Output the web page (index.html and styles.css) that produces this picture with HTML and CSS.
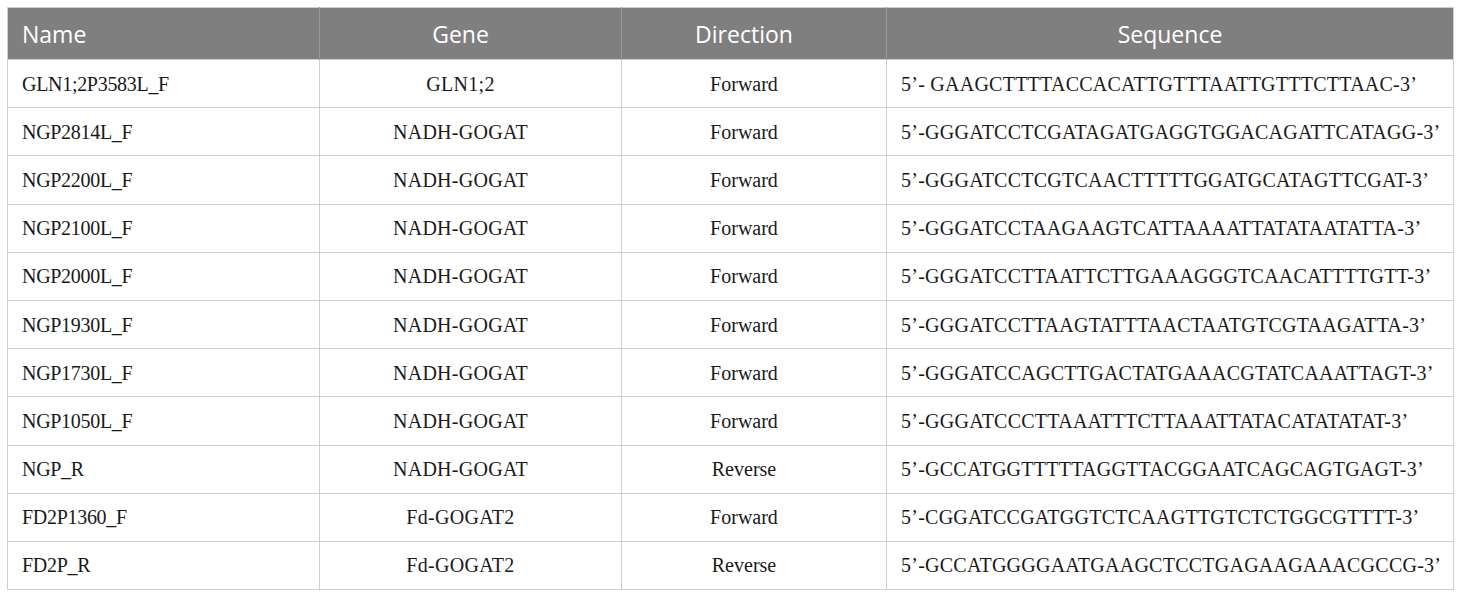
FILE: index.html
```html
<!DOCTYPE html>
<html>
<head>
<meta charset="utf-8">
<link rel="stylesheet" href="styles.css">
</head>
<body>
<table class="primers">
  <colgroup>
    <col class="c-name">
    <col class="c-gene">
    <col class="c-dir">
    <col class="c-seq">
  </colgroup>
  <thead>
    <tr><th class="name">Name</th><th class="gene">Gene</th><th class="dir">Direction</th><th class="seqh">Sequence</th></tr>
  </thead>
  <tbody>
    <tr><td class="name">GLN1;2P3583L_F</td><td class="gene">GLN1;2</td><td class="dir">Forward</td><td class="seq">5’- GAAGCTTTTACCACATTGTTTAATTGTTTCTTAAC-3’</td></tr>
    <tr><td class="name">NGP2814L_F</td><td class="gene">NADH-GOGAT</td><td class="dir">Forward</td><td class="seq">5’-GGGATCCTCGATAGATGAGGTGGACAGATTCATAGG-3’</td></tr>
    <tr><td class="name">NGP2200L_F</td><td class="gene">NADH-GOGAT</td><td class="dir">Forward</td><td class="seq">5’-GGGATCCTCGTCAACTTTTTGGATGCATAGTTCGAT-3’</td></tr>
    <tr><td class="name">NGP2100L_F</td><td class="gene">NADH-GOGAT</td><td class="dir">Forward</td><td class="seq">5’-GGGATCCTAAGAAGTCATTAAAATTATATAATATTA-3’</td></tr>
    <tr><td class="name">NGP2000L_F</td><td class="gene">NADH-GOGAT</td><td class="dir">Forward</td><td class="seq">5’-GGGATCCTTAATTCTTGAAAGGGTCAACATTTTGTT-3’</td></tr>
    <tr><td class="name">NGP1930L_F</td><td class="gene">NADH-GOGAT</td><td class="dir">Forward</td><td class="seq">5’-GGGATCCTTAAGTATTTAACTAATGTCGTAAGATTA-3’</td></tr>
    <tr><td class="name">NGP1730L_F</td><td class="gene">NADH-GOGAT</td><td class="dir">Forward</td><td class="seq">5’-GGGATCCAGCTTGACTATGAAACGTATCAAATTAGT-3’</td></tr>
    <tr><td class="name">NGP1050L_F</td><td class="gene">NADH-GOGAT</td><td class="dir">Forward</td><td class="seq">5’-GGGATCCCTTAAATTTCTTAAATTATACATATATAT-3’</td></tr>
    <tr><td class="name">NGP_R</td><td class="gene">NADH-GOGAT</td><td class="dir">Reverse</td><td class="seq">5’-GCCATGGTTTTTAGGTTACGGAATCAGCAGTGAGT-3’</td></tr>
    <tr><td class="name">FD2P1360_F</td><td class="gene">Fd-GOGAT2</td><td class="dir">Forward</td><td class="seq">5’-CGGATCCGATGGTCTCAAGTTGTCTCTGGCGTTTT-3’</td></tr>
    <tr><td class="name">FD2P_R</td><td class="gene">Fd-GOGAT2</td><td class="dir">Reverse</td><td class="seq">5’-GCCATGGGGAATGAAGCTCCTGAGAAGAAACGCCG-3’</td></tr>
  </tbody>
</table>
</body>
</html>
```
FILE: styles.css
```css
html, body {
  margin: 0;
  padding: 0;
  background: #ffffff;
}
body {
  padding: 7px 0 0 7px;
}
.primers {
  border-collapse: collapse;
  table-layout: fixed;
  width: 1446px;
  border: 1px solid #cfcfcf;
}
.c-name { width: 312px; }
.c-gene { width: 302px; }
.c-dir { width: 265px; }
.c-seq { width: 567px; }
.primers th {
  background: #7f7f7f;
  color: #ffffff;
  font-family: "Open Sans", "Noto Sans", sans-serif;
  font-weight: 400;
  font-size: 23px;
  height: 52px;
  padding: 0 14px;
  text-align: center;
  border-left: 1px solid #9a9a9a;
  box-sizing: border-box;
  vertical-align: middle;
}
.primers th:first-child { border-left: none; }
.primers td {
  font-family: "Liberation Serif", "Times New Roman", serif;
  font-size: 20px;
  color: #1a1a1a;
  height: 48.2px;
  padding: 1px 13px 0 14px;
  text-align: center;
  vertical-align: middle;
  border: 1px solid #cfcfcf;
  box-sizing: border-box;
  white-space: nowrap;
}
.primers .name {
  text-align: left;
}
.primers td.name {
  letter-spacing: -0.3px;
}
.primers .gene,
.primers .dir {
  padding-right: 34px;
}
.primers td.gene {
  letter-spacing: 0.3px;
}
.primers td.seq {
  text-align: left;
  letter-spacing: 0.25px;
}
```
